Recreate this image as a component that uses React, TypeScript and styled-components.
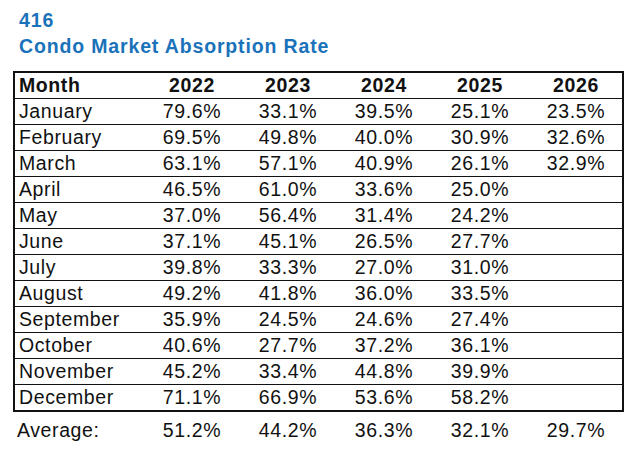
import React from 'react';
import styled, { createGlobalStyle } from 'styled-components';

const GlobalStyle = createGlobalStyle`
  body {
    margin: 0;
    background: #fff;
    font-family: 'Liberation Sans', Arial, sans-serif;
  }
`;

const Page = styled.div`
  width: 643px;
  height: 454px;
  padding: 7px 0 0 13px;
  box-sizing: border-box;
`;

const Heading = styled.div`
  padding-left: 6px;
  color: #1a72ba;
  font-size: 19.5px;
  font-weight: bold;
  line-height: 26px;
  letter-spacing: 0.85px;
  margin-bottom: 12px;
`;

const Table = styled.div`
  width: 611px;
  box-sizing: border-box;
  border: 2px solid #111;
`;

const Row = styled.div<{ $last?: boolean; $bold?: boolean }>`
  display: grid;
  grid-template-columns: 129px repeat(5, 96px);
  height: 25px;
  line-height: 25px;
  border-bottom: ${p => (p.$last ? 'none' : '1px solid #111')};
  font-size: 19.5px;
  letter-spacing: 0.6px;
  font-weight: ${p => (p.$bold ? 'bold' : 'normal')};
  color: #111;
`;

const AverageRow = styled(Row)`
  border-bottom: none;
  margin-top: 6px;
  grid-template-columns: 131px repeat(5, 96px);
`;

const Label = styled.div`
  padding-left: 4px;
  white-space: nowrap;
`;

const Value = styled.div`
  text-align: center;
`;

const years = ['2022', '2023', '2024', '2025', '2026'];

const data: [string, string[]][] = [
  ['January', ['79.6%', '33.1%', '39.5%', '25.1%', '23.5%']],
  ['February', ['69.5%', '49.8%', '40.0%', '30.9%', '32.6%']],
  ['March', ['63.1%', '57.1%', '40.9%', '26.1%', '32.9%']],
  ['April', ['46.5%', '61.0%', '33.6%', '25.0%', '']],
  ['May', ['37.0%', '56.4%', '31.4%', '24.2%', '']],
  ['June', ['37.1%', '45.1%', '26.5%', '27.7%', '']],
  ['July', ['39.8%', '33.3%', '27.0%', '31.0%', '']],
  ['August', ['49.2%', '41.8%', '36.0%', '33.5%', '']],
  ['September', ['35.9%', '24.5%', '24.6%', '27.4%', '']],
  ['October', ['40.6%', '27.7%', '37.2%', '36.1%', '']],
  ['November', ['45.2%', '33.4%', '44.8%', '39.9%', '']],
  ['December', ['71.1%', '66.9%', '53.6%', '58.2%', '']],
];

const averages = ['51.2%', '44.2%', '36.3%', '32.1%', '29.7%'];

const App: React.FC = () => {
  return (
    <Page>
      <GlobalStyle />
      <Heading>
        416
        <br />
        Condo Market Absorption Rate
      </Heading>
      <Table>
        <Row $bold>
          <Label>Month</Label>
          {years.map(y => (
            <Value key={y}>{y}</Value>
          ))}
        </Row>
        {data.map(([month, values], i) => (
          <Row key={month} $last={i === data.length - 1}>
            <Label>{month}</Label>
            {values.map((v, j) => (
              <Value key={j}>{v}</Value>
            ))}
          </Row>
        ))}
      </Table>
      <AverageRow>
        <Label>Average:</Label>
        {averages.map((v, j) => (
          <Value key={j}>{v}</Value>
        ))}
      </AverageRow>
    </Page>
  );
};

export default App;
